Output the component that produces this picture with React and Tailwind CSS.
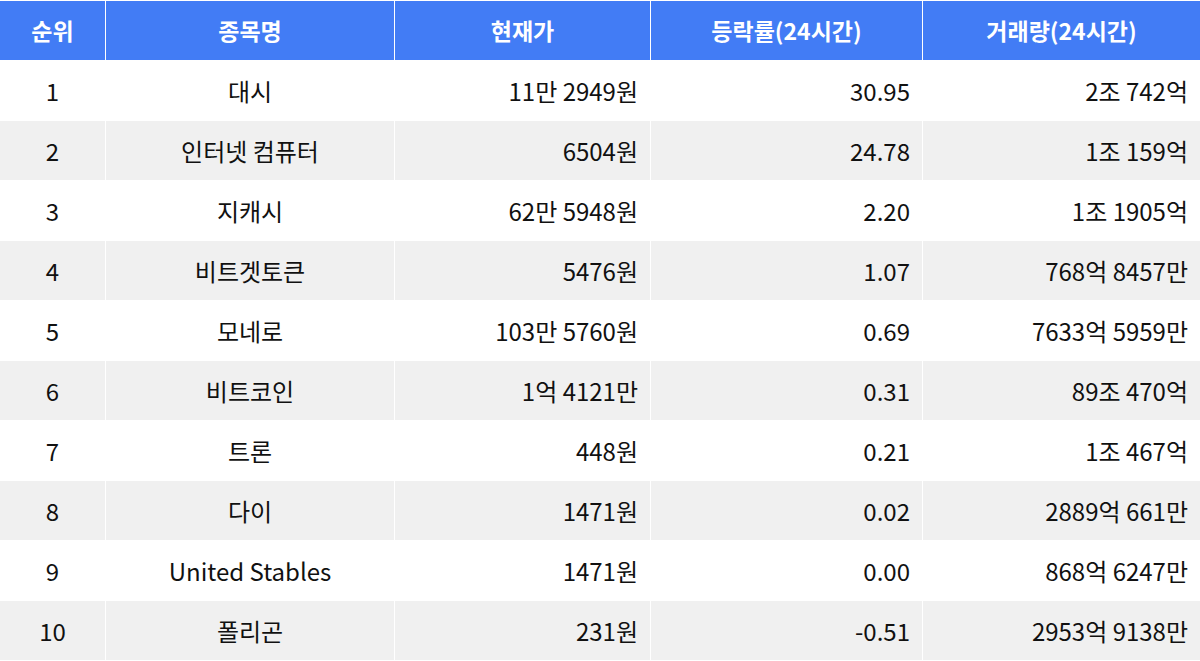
import React from 'react';

const rows = [
  ['1', '대시', '11만 2949원', '30.95', '2조 742억'],
  ['2', '인터넷 컴퓨터', '6504원', '24.78', '1조 159억'],
  ['3', '지캐시', '62만 5948원', '2.20', '1조 1905억'],
  ['4', '비트겟토큰', '5476원', '1.07', '768억 8457만'],
  ['5', '모네로', '103만 5760원', '0.69', '7633억 5959만'],
  ['6', '비트코인', '1억 4121만', '0.31', '89조 470억'],
  ['7', '트론', '448원', '0.21', '1조 467억'],
  ['8', '다이', '1471원', '0.02', '2889억 661만'],
  ['9', 'United Stables', '1471원', '0.00', '868억 6247만'],
  ['10', '폴리곤', '231원', '-0.51', '2953억 9138만'],
];

const headers = ['순위', '종목명', '현재가', '등락률(24시간)', '거래량(24시간)'];

const cols = 'grid grid-cols-[105px_288px_255px_271px_1fr] gap-x-px';

const App = () => {
  return (
    <div
      className="w-[1200px] h-[661px] bg-white pt-px flex flex-col gap-y-px"
      style={{ fontFamily: '"Noto Sans CJK KR", "Noto Sans", sans-serif' }}
    >
      <div className={cols + ' h-[59px]'}>
        {headers.map((h) => (
          <div key={h} className="bg-[#427cf5] text-white font-bold text-[23px] flex items-center justify-center">
            {h}
          </div>
        ))}
      </div>
      {rows.map((r, i) => {
        const bg = i % 2 === 0 ? 'bg-white' : 'bg-[#f0f0f0]';
        return (
          <div key={r[0]} className={cols + ' h-[59px] text-[24px] text-[#111]'}>
            <div className={bg + ' flex items-center justify-center'}>{r[0]}</div>
            <div className={bg + ' flex items-center justify-center'}>{r[1]}</div>
            <div className={bg + ' flex items-center justify-end pr-3'}>{r[2]}</div>
            <div className={bg + ' flex items-center justify-end pr-3'}>{r[3]}</div>
            <div className={bg + ' flex items-center justify-end pr-3'}>{r[4]}</div>
          </div>
        );
      })}
    </div>
  );
};

export default App;
